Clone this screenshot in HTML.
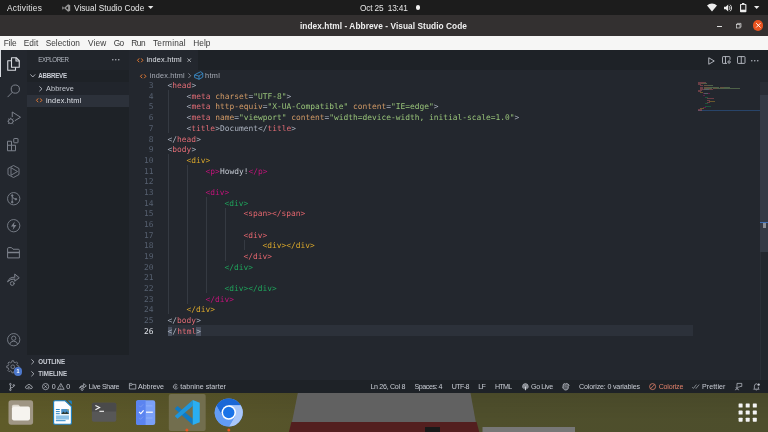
<!DOCTYPE html>
<html lang="en">
<head>
<meta charset="utf-8">
<title>index.html - Abbreve - Visual Studio Code</title>
<style>
*{box-sizing:border-box;margin:0;padding:0}
html,body{width:768px;height:432px;overflow:hidden;background:#23272e}
body{position:relative;font-family:"Liberation Sans",sans-serif;color:#c8ccd4;-webkit-font-smoothing:antialiased}
.a{position:absolute}
#root{left:0;top:0;width:768px;height:432px;will-change:transform}
.t{position:absolute;white-space:nowrap;line-height:12px;height:12px;transform:scaleY(1.1);transform-origin:0 70%}
svg{position:absolute;overflow:visible}
/* top GNOME bar */
#topbar{left:0;top:0;width:768px;height:15px;background:#1c1c1c}
#topbar .t{color:#e6e6e6;font-size:8.3px;top:2px}
/* title bar */
#titlebar{left:0;top:15px;width:768px;height:20.7px;background:#333030}
#titlebar .t{color:#f0f0f0;font-weight:bold;font-size:8.3px;top:4.6px}
/* menubar */
#menubar{left:0;top:35.7px;width:768px;height:14.3px;background:#f6f6f5}
#menubar .t{color:#3a3a3a;font-size:8.3px;top:1.8px}
/* activity bar */
#actbar{left:0;top:50px;width:27px;height:330px;background:#23272e}
#sidebar{left:27px;top:50px;width:101.7px;height:330px;background:#1e2227}
#sidebar .t{color:#c5c9d1}
#tabs{left:128.7px;top:50px;width:639.3px;height:19.7px;background:#1e2227}
#tab1{left:0;top:0;width:69.3px;height:19.7px;background:#23272e}
#crumbs{left:128.7px;top:69.7px;width:631.3px;height:12.8px;background:#23272e}
#editor{left:129px;top:70px;width:639px;height:310px;background:#23272e;overflow:hidden}
#status{left:0;top:380.2px;width:768px;height:12.5px;background:#1e2227}
#status .t{color:#c8ccd4;font-size:7.1px;top:0.5px}
#dock{left:0;top:392.7px;width:768px;height:39.3px;background:linear-gradient(rgba(0,0,0,.07),rgba(0,0,0,0) 70%),linear-gradient(to right,#5f5b29 0%,#58552a 30%,#4f4f2c 62%,#4d4e2c 100%);overflow:hidden}
/* code */
.ln{position:absolute;left:0;width:24.5px;text-align:right;font-family:"DejaVu Sans Mono","Liberation Mono",monospace;font-size:7.9px;line-height:10.7px;height:10.7px;color:#566070;white-space:pre}
.cl{position:absolute;left:38.6px;font-family:"DejaVu Sans Mono","Liberation Mono",monospace;font-size:7.9px;line-height:10.7px;height:10.7px;color:#abb2bf;white-space:pre}
.r{color:#e06c75}.o{color:#d19a66}.g{color:#98c379}.w{color:#abb2bf}
.y{color:#d8a62b}.m{color:#c2137a}.gr{color:#1fa35b}.s{color:#e4666e}
.ig{position:absolute;width:1px;background:#353a42}
.ln.cur{color:#dfe2e8}
.tx{color:#c3c8d1}
.bm{background:#4a5160}
.mm{position:absolute;height:0.8px;opacity:.5}
</style>
</head>
<body>
<div id="root" class="a">

<!-- ===== GNOME top bar ===== -->
<div id="topbar" class="a">
  <span class="t" id="tb1" style="left:7px;letter-spacing:0.238px">Activities</span>
  <svg style="left:61.5px;top:3.5px" width="8.5" height="8" viewBox="0 0 17 16"><path d="M12.2 0.6 L16.4 2.6 V13.4 L12.2 15.4 L4.6 8.6 L1.6 11 L0.4 10.3 V5.7 L1.6 5 L4.6 7.4 Z M12.2 4.6 L7.6 8 L12.2 11.4 Z M1.8 6.6 V9.4 L3.4 8 Z" fill="#9a9a9a" fill-rule="evenodd"/></svg>
  <span class="t" id="tb2" style="left:74px;letter-spacing:-0.007px">Visual Studio Code</span>
  <svg style="left:147.5px;top:6.2px" width="5.4" height="3" viewBox="0 0 54 30"><path d="M0 0H54L27 30Z" fill="#e6e6e6"/></svg>
  <span class="t" id="tb3" style="left:360px;letter-spacing:-0.170px">Oct 25&nbsp; 13:41</span>
  <div class="a" style="left:415.6px;top:5.3px;width:4.4px;height:4.4px;border-radius:50%;background:#f2f2f2"></div>
  <!-- wifi -->
  <svg style="left:707px;top:3.2px" width="10" height="8.4" viewBox="0 0 100 84"><path d="M50 84 L0 24 A78 78 0 0 1 100 24 Z" fill="#ececec"/></svg>
  <!-- volume -->
  <svg style="left:723.5px;top:3.5px" width="9.5" height="8" viewBox="0 0 95 80"><path d="M0 27H18L42 6V74L18 53H0Z" fill="#ececec"/><path d="M54 24A22 22 0 0 1 54 56M64 10A40 40 0 0 1 64 70" fill="none" stroke="#ececec" stroke-width="9" stroke-linecap="round"/></svg>
  <!-- battery -->
  <svg style="left:740.3px;top:2.8px" width="6.4" height="9.2" viewBox="0 0 64 92"><path d="M20 0H44V9H56Q64 9 64 17V84Q64 92 56 92H8Q0 92 0 84V17Q0 9 8 9H20Z" fill="#ececec"/><rect x="11" y="19" width="42" height="48" fill="#262626"/></svg>
  <svg style="left:754.3px;top:6.2px" width="5.4" height="3" viewBox="0 0 54 30"><path d="M0 0H54L27 30Z" fill="#ececec"/></svg>
</div>

<!-- ===== Title bar ===== -->
<div id="titlebar" class="a">
  <span class="t" id="tt1" style="left:300px;letter-spacing:0.060px">index.html - Abbreve - Visual Studio Code</span>
  <div class="a" style="left:717.4px;top:10.9px;width:4.2px;height:0.9px;background:#e0e0e0"></div>
  <svg style="left:736px;top:7.6px" width="5.4" height="5.4" viewBox="0 0 54 54"><path d="M12 12V4H50V42H42" fill="none" stroke="#dcdcdc" stroke-width="7"/><rect x="4" y="14" width="36" height="36" fill="none" stroke="#dcdcdc" stroke-width="7"/></svg>
  <div class="a" style="left:752.6px;top:5.2px;width:10.7px;height:10.7px;border-radius:50%;background:#e95420"></div>
  <svg style="left:755.6px;top:8.2px" width="4.7" height="4.7" viewBox="0 0 10 10"><path d="M1 1L9 9M9 1L1 9" stroke="#fff" stroke-width="2" stroke-linecap="round"/></svg>
</div>

<!-- ===== Menu bar ===== -->
<div id="menubar" class="a">
  <span class="t" id="mn1" style="left:3.7px;letter-spacing:-0.136px">File</span>
  <span class="t" id="mn2" style="left:23.7px;letter-spacing:0.144px">Edit</span>
  <span class="t" id="mn3" style="left:45.7px;letter-spacing:0.019px">Selection</span>
  <span class="t" id="mn4" style="left:88px;letter-spacing:0.130px">View</span>
  <span class="t" id="mn5" style="left:113.7px;letter-spacing:-0.652px">Go</span>
  <span class="t" id="mn6" style="left:131.3px;letter-spacing:-0.414px">Run</span>
  <span class="t" id="mn7" style="left:153px;letter-spacing:0.192px">Terminal</span>
  <span class="t" id="mn8" style="left:193.3px;letter-spacing:0.035px">Help</span>
</div>

<!-- ===== Activity bar ===== -->
<div id="actbar" class="a">
  <div class="a" style="left:0;top:0;width:1.2px;height:27px;background:#d7dae0"></div>
  <!-- explorer -->
  <svg style="left:7px;top:6.5px" width="13" height="14" viewBox="0 0 26 28" fill="none" stroke="#d7dae0" stroke-width="2.2" stroke-linejoin="round"><path d="M9 1.5H18.5L24.5 7.5V20.5H9Z"/><path d="M18 1.5V8H24.5"/><path d="M9 7.5H1.5V26.5H17V20.5"/></svg>
  <!-- search -->
  <svg style="left:7px;top:33.5px" width="13" height="14" viewBox="0 0 26 28" fill="none" stroke="#7d828c" stroke-width="2"><circle cx="16.6" cy="10.2" r="8.2"/><path d="M10.8 16.4L1.2 26.2"/></svg>
  <!-- debug -->
  <svg style="left:6.5px;top:60.5px" width="14" height="14" viewBox="0 0 28 28" fill="none" stroke="#7d828c" stroke-width="2" stroke-linejoin="round"><path d="M10.5 12V2L27 12.5L15.5 19.5"/><circle cx="7.5" cy="20.5" r="4.6"/><path d="M7.5 16V13.5M1 20.5H3M12 20.5H14M2.5 15.5L4.3 17.2M12.5 15.5L10.7 17.2M2.5 25.8L4.3 24M12.5 25.8L10.7 24"/></svg>
  <!-- extensions -->
  <svg style="left:7px;top:87.5px" width="13" height="13.5" viewBox="0 0 26 27" fill="none" stroke="#7d828c" stroke-width="2" stroke-linejoin="round"><path d="M1 6.5H9V14.5H17V25.5H1Z"/><path d="M1 14.5H9V25.5"/><rect x="13.5" y="1" width="8.5" height="8.5" rx="1"/></svg>
  <!-- hex play -->
  <svg style="left:7px;top:115px" width="13" height="13" viewBox="0 0 26 26" fill="none" stroke="#7d828c" stroke-width="1.8" stroke-linejoin="round"><path d="M13 1L24 7V19L13 25L2 19V7Z"/><path d="M8 5.5V20.5L21 13Z"/></svg>
  <!-- git graph circle -->
  <svg style="left:6.7px;top:141.7px" width="13.4" height="13.4" viewBox="0 0 27 27" fill="none" stroke="#7d828c" stroke-width="1.8"><circle cx="13.5" cy="13.5" r="12.4"/><path d="M10.5 7V20M10.5 8.5Q12 14 17.5 14.5"/><circle cx="10.5" cy="7" r="1.6" fill="#7d828c"/><circle cx="10.5" cy="20.5" r="1.6" fill="#7d828c"/><circle cx="18" cy="14.5" r="1.6" fill="#7d828c"/></svg>
  <!-- lightning circle -->
  <svg style="left:6.7px;top:168.8px" width="13.4" height="13.4" viewBox="0 0 27 27" fill="none" stroke="#7d828c" stroke-width="1.8"><circle cx="13.5" cy="13.5" r="12.4"/><path d="M15.5 5L8 15H13L11.5 22L19 12H14Z" fill="#7d828c" stroke="none"/></svg>
  <!-- folder -->
  <svg style="left:7px;top:196.5px" width="13" height="11.5" viewBox="0 0 26 23" fill="none" stroke="#7d828c" stroke-width="2" stroke-linejoin="round"><path d="M1.2 21.8V3.5Q1.2 1.2 3.5 1.2H9L12 4.5H22.5Q24.8 4.5 24.8 6.8V21.8Z"/><path d="M1.2 11H24.8" stroke-width="3"/></svg>
  <!-- live share -->
  <svg style="left:7px;top:223px" width="13" height="13" viewBox="0 0 26 26" fill="none" stroke="#7d828c" stroke-width="2" stroke-linejoin="round" stroke-linecap="round"><path d="M1.5 17Q4 8 15.5 8.5V2L24.5 9.5L15.5 16.5V12Q7 11.5 1.5 17Z" fill="#7d828c" fill-opacity="0.15"/><circle cx="10.5" cy="21" r="3.8"/></svg>
  <!-- account -->
  <svg style="left:6.7px;top:282.8px" width="13.4" height="13.4" viewBox="0 0 27 27" fill="none" stroke="#7d828c" stroke-width="1.8"><circle cx="13.5" cy="13.5" r="12.4"/><circle cx="13.5" cy="10.5" r="4.3"/><path d="M5.5 22.5Q7 16.5 13.5 16.5T21.5 22.5"/></svg>
  <!-- gear -->
  <svg style="left:6.2px;top:309.8px" width="13.6" height="13.6" viewBox="0 0 28 28" fill="none" stroke="#7d828c" stroke-width="1.8" stroke-linejoin="round"><path d="M26.47 12.22L26.47 15.78L23.33 16.24L22.19 19.02L24.08 21.57L21.57 24.08L19.02 22.19L16.24 23.33L15.78 26.47L12.22 26.47L11.76 23.33L8.98 22.19L6.43 24.08L3.92 21.57L5.81 19.02L4.67 16.24L1.53 15.78L1.53 12.22L4.67 11.76L5.81 8.98L3.92 6.43L6.43 3.92L8.98 5.81L11.76 4.67L12.22 1.53L15.78 1.53L16.24 4.67L19.02 5.81L21.57 3.92L24.08 6.43L22.19 8.98L23.33 11.76Z"/><circle cx="14" cy="14" r="3.8"/></svg>
  <div class="a" style="left:13.7px;top:316.8px;width:8.8px;height:8.8px;border-radius:50%;background:#4d78cc"></div>
  <span class="t" style="left:16.6px;top:315.3px;font-size:5.4px;font-weight:bold;color:#fff">1</span>
</div>

<!-- ===== Side bar ===== -->
<div id="sidebar" class="a">
  <div class="a" style="left:0;top:0;width:102px;height:19.7px;background:#21252b"></div>
  <div class="a" style="left:0;top:32px;width:102px;height:12.5px;background:#21252c"></div>
  <div class="a" style="left:0;top:44.5px;width:102px;height:12.1px;background:#2c313a"></div>
  <div class="a" style="left:0;top:305.4px;width:102px;height:24.8px;background:#23272e"></div>
  <span class="t" id="sb1" style="left:11.3px;top:3.7px;font-size:6.2px;color:#b4b9c2;letter-spacing:-0.440px">EXPLORER</span>
  <svg style="left:85px;top:9.2px" width="7.6" height="1.6" viewBox="0 0 76 16" fill="#c0c4cc"><circle cx="8" cy="8" r="7"/><circle cx="38" cy="8" r="7"/><circle cx="68" cy="8" r="7"/></svg>
  <svg style="left:2.6px;top:24.2px" width="5.6" height="3.6" viewBox="0 0 56 36" fill="none" stroke="#c5c9d1" stroke-width="8"><path d="M4 4L28 30L52 4"/></svg>
  <span class="t" id="sb2" style="left:11.3px;top:20px;font-size:6.2px;font-weight:bold;color:#c9cdd5;letter-spacing:-0.241px">ABBREVE</span>
  <svg style="left:11.6px;top:35.6px" width="3.6" height="5.6" viewBox="0 0 36 56" fill="none" stroke="#c5c9d1" stroke-width="8"><path d="M4 4L30 28L4 52"/></svg>
  <span class="t" id="sb3" style="left:19px;top:32.8px;font-size:7.3px;letter-spacing:0.125px">Abbreve</span>
  <svg style="left:9.2px;top:48.3px" width="6.4" height="4.6" viewBox="0 0 64 46" fill="none" stroke="#e37933" stroke-width="10"><path d="M22 4L5 23L22 42M42 4L59 23L42 42"/></svg>
  <span class="t" id="sb4" style="left:19px;top:45.2px;font-size:7.3px;color:#dfe2e8;letter-spacing:0.214px">index.html</span>
  <svg style="left:4.2px;top:308.8px" width="3.4" height="5.6" viewBox="0 0 34 56" fill="none" stroke="#c5c9d1" stroke-width="8"><path d="M4 4L29 28L4 52"/></svg>
  <span class="t" id="sb5" style="left:11.3px;top:305.6px;font-size:6.2px;font-weight:bold;color:#c9cdd5;letter-spacing:-0.070px">OUTLINE</span>
  <svg style="left:4.2px;top:321.2px" width="3.4" height="5.6" viewBox="0 0 34 56" fill="none" stroke="#c5c9d1" stroke-width="8"><path d="M4 4L29 28L4 52"/></svg>
  <span class="t" id="sb6" style="left:11.3px;top:318px;font-size:6.2px;font-weight:bold;color:#c9cdd5;letter-spacing:-0.023px">TIMELINE</span>
</div>

<!-- ===== Tabs ===== -->
<div id="tabs" class="a">
  <div id="tab1" class="a"></div>
  <svg style="left:8px;top:7.7px" width="6.4" height="4.6" viewBox="0 0 64 46" fill="none" stroke="#e37933" stroke-width="10"><path d="M22 4L5 23L22 42M42 4L59 23L42 42"/></svg>
  <span class="t" id="tab_t" style="left:17.7px;top:4px;font-size:7.3px;color:#dfe2e8;letter-spacing:0.214px">index.html</span>
  <svg style="left:58.8px;top:7.8px" width="4.4" height="4.4" viewBox="0 0 10 10"><path d="M1 1L9 9M9 1L1 9" stroke="#d7dae0" stroke-width="1.5"/></svg>
  <!-- editor actions -->
  <svg style="left:579.4px;top:6.5px" width="7" height="8" viewBox="0 0 14 16" fill="none" stroke="#c5c9d1" stroke-width="1.7" stroke-linejoin="round"><path d="M1.5 1.5L12.5 8L1.5 14.5Z"/></svg>
  <svg style="left:593.6px;top:6.3px" width="9" height="8" viewBox="0 0 18 16" fill="none" stroke="#c5c9d1" stroke-width="1.7" stroke-linejoin="round"><path d="M10 14.8H2.3Q1 14.8 1 13.5V2.5Q1 1.2 2.3 1.2H14.7Q16 1.2 16 2.5V7.5M7 1.2V14.8"/><circle cx="14.2" cy="12" r="2.4"/></svg>
  <svg style="left:608.5px;top:6.3px" width="8.5" height="8" viewBox="0 0 17 16" fill="none" stroke="#c5c9d1" stroke-width="1.7" stroke-linejoin="round"><rect x="1" y="1.2" width="15" height="13.6" rx="1.3"/><path d="M8.5 1.2V14.8"/></svg>
  <svg style="left:622.8px;top:9.6px" width="7.6" height="1.6" viewBox="0 0 76 16" fill="#c5c9d1"><circle cx="8" cy="8" r="7"/><circle cx="38" cy="8" r="7"/><circle cx="68" cy="8" r="7"/></svg>
</div>

<!-- ===== Editor ===== -->
<div id="editor" class="a">
  <div class="a" style="left:39px;top:255.11px;width:525px;height:10.68px;background:#2c313a"></div>
  <div class="ig" style="left:39.30px;top:20.10px;height:42.73px"></div>
  <div class="ig" style="left:39.30px;top:84.20px;height:160.23px"></div>
  <div class="ig" style="left:58.34px;top:94.88px;height:138.87px"></div>
  <div class="ig" style="left:77.39px;top:126.92px;height:96.14px"></div>
  <div class="ig" style="left:96.43px;top:137.61px;height:53.41px"></div>
  <div class="ig" style="left:115.48px;top:169.65px;height:10.68px"></div>
  <div class="ln" style="top:11.12px">3</div>
  <div class="cl" style="top:11.12px"><span class="w">&lt;</span><span class="r">head</span><span class="w">&gt;</span></div>
  <div class="ln" style="top:21.80px">4</div>
  <div class="cl" style="top:21.80px">    <span class="w">&lt;</span><span class="r">meta</span> <span class="o">charset</span>=<span class="g">"UTF-8"</span>&gt;</div>
  <div class="ln" style="top:32.49px">5</div>
  <div class="cl" style="top:32.49px">    <span class="w">&lt;</span><span class="r">meta</span> <span class="o">http-equiv</span>=<span class="g">"X-UA-Compatible"</span> <span class="o">content</span>=<span class="g">"IE=edge"</span>&gt;</div>
  <div class="ln" style="top:43.17px">6</div>
  <div class="cl" style="top:43.17px">    <span class="w">&lt;</span><span class="r">meta</span> <span class="o">name</span>=<span class="g">"viewport"</span> <span class="o">content</span>=<span class="g">"width=device-width, initial-scale=1.0"</span>&gt;</div>
  <div class="ln" style="top:53.85px">7</div>
  <div class="cl" style="top:53.85px">    &lt;<span class="r">title</span>&gt;Document&lt;/<span class="r">title</span>&gt;</div>
  <div class="ln" style="top:64.53px">8</div>
  <div class="cl" style="top:64.53px">&lt;/<span class="r">head</span>&gt;</div>
  <div class="ln" style="top:75.21px">9</div>
  <div class="cl" style="top:75.21px">&lt;<span class="r">body</span>&gt;</div>
  <div class="ln" style="top:85.90px">10</div>
  <div class="cl" style="top:85.90px">    <span class="y">&lt;div&gt;</span></div>
  <div class="ln" style="top:96.58px">11</div>
  <div class="cl" style="top:96.58px">        <span class="m">&lt;p&gt;</span><span class="tx">Howdy!</span><span class="m">&lt;/p&gt;</span></div>
  <div class="ln" style="top:107.26px">12</div>
  <div class="ln" style="top:117.94px">13</div>
  <div class="cl" style="top:117.94px">        <span class="m">&lt;div&gt;</span></div>
  <div class="ln" style="top:128.62px">14</div>
  <div class="cl" style="top:128.62px">            <span class="gr">&lt;div&gt;</span></div>
  <div class="ln" style="top:139.31px">15</div>
  <div class="cl" style="top:139.31px">                <span class="s">&lt;span&gt;&lt;/span&gt;</span></div>
  <div class="ln" style="top:149.99px">16</div>
  <div class="ln" style="top:160.67px">17</div>
  <div class="cl" style="top:160.67px">                <span class="s">&lt;div&gt;</span></div>
  <div class="ln" style="top:171.35px">18</div>
  <div class="cl" style="top:171.35px">                    <span class="y">&lt;div&gt;&lt;/div&gt;</span></div>
  <div class="ln" style="top:182.03px">19</div>
  <div class="cl" style="top:182.03px">                <span class="s">&lt;/div&gt;</span></div>
  <div class="ln" style="top:192.72px">20</div>
  <div class="cl" style="top:192.72px">            <span class="gr">&lt;/div&gt;</span></div>
  <div class="ln" style="top:203.40px">21</div>
  <div class="ln" style="top:214.08px">22</div>
  <div class="cl" style="top:214.08px">            <span class="gr">&lt;div&gt;&lt;/div&gt;</span></div>
  <div class="ln" style="top:224.76px">23</div>
  <div class="cl" style="top:224.76px">        <span class="m">&lt;/div&gt;</span></div>
  <div class="ln" style="top:235.44px">24</div>
  <div class="cl" style="top:235.44px">    <span class="y">&lt;/div&gt;</span></div>
  <div class="ln" style="top:246.13px">25</div>
  <div class="cl" style="top:246.13px">&lt;/<span class="r">body</span>&gt;</div>
  <div class="ln cur" style="top:256.81px">26</div>
  <div class="cl" style="top:256.81px"><span class="bm">&lt;</span>/<span class="r">html</span><span class="bm">&gt;</span></div>
  <div class="a" style="left:569px;top:40.00px;width:62px;height:1px;background:#284469"></div>
  <div class="mm" style="left:569.00px;top:12.00px;width:8.43px;background:#b4565e"></div>
  <div class="mm" style="left:569.00px;top:13.12px;width:2.81px;background:#b4565e"></div>
  <div class="mm" style="left:571.81px;top:13.12px;width:2.81px;background:#a87b52"></div>
  <div class="mm" style="left:574.62px;top:13.12px;width:3.37px;background:#7a9c61"></div>
  <div class="mm" style="left:569.00px;top:14.25px;width:3.37px;background:#b4565e"></div>
  <div class="mm" style="left:571.25px;top:15.37px;width:2.81px;background:#b4565e"></div>
  <div class="mm" style="left:574.62px;top:15.37px;width:4.50px;background:#a87b52"></div>
  <div class="mm" style="left:579.12px;top:15.37px;width:4.50px;background:#7a9c61"></div>
  <div class="mm" style="left:571.25px;top:16.50px;width:2.81px;background:#b4565e"></div>
  <div class="mm" style="left:574.62px;top:16.50px;width:6.18px;background:#a87b52"></div>
  <div class="mm" style="left:580.80px;top:16.50px;width:9.55px;background:#7a9c61"></div>
  <div class="mm" style="left:590.92px;top:16.50px;width:4.50px;background:#a87b52"></div>
  <div class="mm" style="left:595.41px;top:16.50px;width:5.62px;background:#7a9c61"></div>
  <div class="mm" style="left:571.25px;top:17.62px;width:2.81px;background:#b4565e"></div>
  <div class="mm" style="left:574.62px;top:17.62px;width:2.81px;background:#a87b52"></div>
  <div class="mm" style="left:577.43px;top:17.62px;width:5.62px;background:#7a9c61"></div>
  <div class="mm" style="left:583.61px;top:17.62px;width:4.50px;background:#a87b52"></div>
  <div class="mm" style="left:588.11px;top:17.62px;width:22.48px;background:#7a9c61"></div>
  <div class="mm" style="left:571.25px;top:18.74px;width:3.93px;background:#b4565e"></div>
  <div class="mm" style="left:575.18px;top:18.74px;width:4.50px;background:#8a909b"></div>
  <div class="mm" style="left:579.68px;top:18.74px;width:4.50px;background:#b4565e"></div>
  <div class="mm" style="left:569.00px;top:19.87px;width:3.93px;background:#b4565e"></div>
  <div class="mm" style="left:569.00px;top:20.99px;width:3.37px;background:#b4565e"></div>
  <div class="mm" style="left:571.25px;top:22.12px;width:2.81px;background:#b0882a"></div>
  <div class="mm" style="left:573.50px;top:23.24px;width:1.69px;background:#9c1463"></div>
  <div class="mm" style="left:575.18px;top:23.24px;width:3.37px;background:#8a909b"></div>
  <div class="mm" style="left:578.55px;top:23.24px;width:2.25px;background:#9c1463"></div>
  <div class="mm" style="left:573.50px;top:25.49px;width:2.81px;background:#9c1463"></div>
  <div class="mm" style="left:575.74px;top:26.61px;width:2.81px;background:#1c824a"></div>
  <div class="mm" style="left:577.99px;top:27.74px;width:7.31px;background:#b4525a"></div>
  <div class="mm" style="left:577.99px;top:29.98px;width:2.81px;background:#b4525a"></div>
  <div class="mm" style="left:580.24px;top:31.11px;width:6.18px;background:#b0882a"></div>
  <div class="mm" style="left:577.99px;top:32.23px;width:3.37px;background:#b4525a"></div>
  <div class="mm" style="left:575.74px;top:33.36px;width:3.37px;background:#1c824a"></div>
  <div class="mm" style="left:575.74px;top:35.60px;width:6.18px;background:#1c824a"></div>
  <div class="mm" style="left:573.50px;top:36.73px;width:3.37px;background:#9c1463"></div>
  <div class="mm" style="left:571.25px;top:37.85px;width:3.37px;background:#b0882a"></div>
  <div class="mm" style="left:569.00px;top:38.98px;width:3.93px;background:#b4565e"></div>
  <div class="mm" style="left:569.00px;top:40.10px;width:3.93px;background:#b4565e"></div>
  <div class="a" style="left:631px;top:12px;width:1px;height:298.2px;background:#2b2f37"></div>
  <div class="a" style="left:631.4px;top:12px;width:7.6px;height:13px;background:#292d35"></div>
  <div class="a" style="left:631.4px;top:25px;width:7.6px;height:156.9px;background:#343a45"></div>
  <div class="a" style="left:631.4px;top:152px;width:7.6px;height:1px;background:#3f6fb5"></div>
  <div class="a" style="left:633.9px;top:153px;width:3.1px;height:5px;background:#8b8f97"></div>
</div>
<div id="crumbs" class="a">
  <svg style="left:11px;top:4px" width="6.4" height="4.6" viewBox="0 0 64 46" fill="none" stroke="#e37933" stroke-width="10"><path d="M22 4L5 23L22 42M42 4L59 23L42 42"/></svg>
  <span class="t" id="cr1" style="left:21px;top:0.7px;font-size:7.3px;color:#a9aeb8;letter-spacing:0.183px">index.html</span>
  <svg style="left:59.3px;top:3.5px" width="3.2" height="5.4" viewBox="0 0 32 54" fill="none" stroke="#a9aeb8" stroke-width="7"><path d="M4 4L27 27L4 50"/></svg>
  <svg style="left:65.2px;top:1.6px" width="9.2" height="9" viewBox="0 0 23 22" fill="none" stroke="#3e9fe6" stroke-width="1.9" stroke-linejoin="round"><path d="M7.5 6L17 1.5L22 5.5V15L12.5 20.5L1.5 16V9.5Z"/><path d="M1.5 9.5L12.5 12.5L22 5.5M12.5 12.5V20.5"/></svg>
  <span class="t" id="cr2" style="left:76.3px;top:0.7px;font-size:7.3px;color:#a9aeb8;letter-spacing:0.344px">html</span>
</div>

<!-- ===== Status bar ===== -->
<div id="status" class="a">
  <!-- branch -->
  <svg style="left:8.8px;top:2.4px" width="6.2" height="8" viewBox="0 0 62 80" fill="none" stroke="#c3c7cf" stroke-width="7"><circle cx="14" cy="12" r="8"/><circle cx="14" cy="68" r="8"/><circle cx="48" cy="24" r="8"/><path d="M14 20V60M48 32Q46 46 14 50"/></svg>
  <!-- cloud -->
  <svg style="left:25.4px;top:3.7px" width="7.8" height="5.6" viewBox="0 0 78 56" fill="none" stroke="#c3c7cf" stroke-width="7" stroke-linejoin="round"><path d="M28 46H16Q4 44 4 32Q6 20 18 20Q24 4 40 4Q56 4 60 20Q74 22 74 34Q72 46 60 46H50"/><path d="M39 54V26M29 36L39 26L49 36"/></svg>
  <!-- errors -->
  <svg style="left:42.4px;top:2.8px" width="7.2" height="7.2" viewBox="0 0 72 72" fill="none" stroke="#c3c7cf" stroke-width="7"><circle cx="36" cy="36" r="31"/><path d="M24 24L48 48M48 24L24 48"/></svg>
  <span class="t" id="st1" style="left:51.8px">0</span>
  <svg style="left:56.8px;top:3px" width="7.6" height="6.8" viewBox="0 0 76 68" fill="none" stroke="#c3c7cf" stroke-width="7" stroke-linejoin="round"><path d="M38 5L72 63H4Z"/><path d="M38 26V44M38 50V56"/></svg>
  <span class="t" id="st2" style="left:66.3px">0</span>
  <!-- live share -->
  <svg style="left:79.3px;top:2.6px" width="7.8" height="7.8" viewBox="0 0 26 26" fill="none" stroke="#c3c7cf" stroke-width="2.4" stroke-linejoin="round"><path d="M1.5 17Q4 8 15.5 8.5V2L24.5 9.5L15.5 16.5V12Q7 11.5 1.5 17Z"/><circle cx="10.5" cy="21" r="3.6"/></svg>
  <span class="t" id="st3" style="left:88.7px;letter-spacing:-0.350px">Live Share</span>
  <!-- folder -->
  <svg style="left:129px;top:3.2px" width="7.2" height="6.4" viewBox="0 0 72 64" fill="none" stroke="#c3c7cf" stroke-width="7" stroke-linejoin="round"><path d="M4 60V4H26L32 14H68V60Z"/><path d="M4 22H30L34 14"/></svg>
  <span class="t" id="st4" style="left:138px;letter-spacing:-0.065px">Abbreve</span>
  <svg style="left:173.2px;top:3.6px" width="5.4" height="5.6" viewBox="0 0 54 56" fill="none" stroke="#c3c7cf" stroke-width="7" stroke-linejoin="round"><path d="M44 12A23 23 0 1 0 48 36"/><path d="M22 18V38L38 28Z" stroke-width="5"/></svg>
  <span class="t" id="st5" style="left:180.3px;letter-spacing:0.023px">tabnine starter</span>

  <span class="t" id="st6" style="left:370.4px;letter-spacing:-0.301px">Ln 26, Col 8</span>
  <span class="t" id="st7" style="left:414.6px;letter-spacing:-0.454px">Spaces: 4</span>
  <span class="t" id="st8" style="left:451.7px;letter-spacing:-0.580px">UTF-8</span>
  <span class="t" id="st9" style="left:478.3px;letter-spacing:-0.654px">LF</span>
  <span class="t" id="st10" style="left:495px;letter-spacing:-0.746px">HTML</span>
  <!-- go live -->
  <svg style="left:521.8px;top:2.4px" width="6.8" height="7.4" viewBox="0 0 68 74"><circle cx="34" cy="34" r="30" fill="#c3c7cf" fill-opacity=".45"/><circle cx="34" cy="34" r="27" fill="none" stroke="#c3c7cf" stroke-width="7" stroke-dasharray="127 43" stroke-dashoffset="-64"/><circle cx="34" cy="34" r="14" fill="none" stroke="#c3c7cf" stroke-width="6" stroke-opacity=".8"/><rect x="30" y="34" width="8" height="38" fill="#e4e7ec"/></svg>
  <span class="t" id="st11" style="left:531px;letter-spacing:-0.377px">Go Live</span>
  <!-- copilot-ish -->
  <svg style="left:562.2px;top:2.4px" width="7.6" height="7.4" viewBox="0 0 76 74" fill="#c3c7cf" fill-opacity=".35" stroke="#c3c7cf" stroke-width="8" stroke-linejoin="round"><path d="M14 12Q24 2 36 10Q50 0 60 12L72 22L62 32V56Q50 70 38 70Q24 70 14 56L6 50L14 40L6 30L14 22Z"/><path d="M30 26L40 36" stroke-width="6"/></svg>
  <span class="t" id="st12" style="left:579.1px;letter-spacing:-0.165px">Colorize: 0 variables</span>
  <svg style="left:649.2px;top:2.8px" width="7.2" height="7.2" viewBox="0 0 72 72" fill="none" stroke="#e0806a" stroke-width="8"><circle cx="36" cy="36" r="30"/><path d="M57 15L15 57"/></svg>
  <span class="t" id="st13" style="left:658.7px;color:#e0806a;letter-spacing:-0.191px">Colorize</span>
  <svg style="left:692px;top:4px" width="7.6" height="5" viewBox="0 0 76 50" fill="none" stroke="#c3c7cf" stroke-width="6"><path d="M2 32L14 44L44 6M34 38L40 44L72 6"/></svg>
  <span class="t" id="st14" style="left:702px;letter-spacing:0.083px">Prettier</span>
  <!-- feedback -->
  <svg style="left:735.2px;top:2.8px" width="7.2" height="7.4" viewBox="0 0 72 74" fill="none" stroke="#c3c7cf" stroke-width="7" stroke-linejoin="round"><path d="M20 34V4H68V34H50L40 44V34"/><circle cx="20" cy="46" r="8"/><path d="M4 72Q6 58 20 58T36 72"/></svg>
  <!-- bell -->
  <svg style="left:752.8px;top:2.6px" width="7.2" height="8" viewBox="0 0 72 80" fill="none" stroke="#c3c7cf" stroke-width="7" stroke-linejoin="round"><path d="M40 8H32Q14 12 14 32V54L6 62H62L54 54V38"/><path d="M28 66Q34 78 40 66"/><circle cx="56" cy="16" r="12" fill="#c3c7cf" stroke="none"/></svg>
</div>

<!-- ===== Dock ===== -->
<div id="dock" class="a">
  <!-- wallpaper shapes (coordinates relative to dock top = 392.7) -->
  <svg style="left:0;top:0" width="768" height="40" viewBox="0 0 768 40">
    <path d="M297.8 0H470.5L475.8 29.1H292Z" fill="#616161"/>
    <path d="M291.4 29.1H476.6L479.5 40H288.7Z" fill="#531f1f"/>
    <rect x="425" y="34" width="15" height="6" fill="#191919"/>
    <rect x="482.5" y="34" width="92.5" height="6" fill="#777777"/>
    <!-- running app highlight -->
    <rect x="168.8" y="1" width="36.9" height="36.9" rx="2" fill="#726e4e"/>
    <!-- files -->
    <rect x="8.5" y="7.3" width="24.6" height="24.4" rx="2.6" fill="#9f9684"/>
    <path d="M11.9 13.4Q11.9 11.7 13.6 11.7H18.6L20.4 14.2H11.9Z" fill="#ddd8cd"/>
    <rect x="11.9" y="13.6" width="18.1" height="13.8" rx="1.8" fill="#f6f4ef"/>
    <!-- writer -->
    <path d="M55 7.8H65.2L71.4 13.6V30Q71.4 31.3 70 31.3H55Q53.6 31.3 53.6 30V9.2Q53.6 7.8 55 7.8Z" fill="#fcfdfe" stroke="#1c7fc0" stroke-width="1.1"/>
    <path d="M67.6 7.5H70.6Q71.9 7.5 71.9 8.8V11.8Z" fill="#1c7fc0"/>
    <rect x="61.25" y="16" width="7.75" height="5.1" fill="#4a90c8"/>
    <path d="M61.25 21.1L63.4 18.6L65 20L66.6 18.4L69 21.1Z" fill="#2e3a33"/>
    <rect x="67.6" y="16.2" width="1.2" height="1.2" fill="#e8d44a"/>
    <path d="M55.9 16.5H59.75M55.9 18.6H59.75M55.9 20.7H59.75M55.9 27.7H65.6" stroke="#2a86c8" stroke-width="1"/>
    <rect x="55.9" y="22.4" width="13.1" height="4.2" fill="#8fc3e8"/>
    <!-- terminal -->
    <rect x="91.9" y="9.8" width="24.35" height="19" rx="1.8" fill="#575757"/>
    <path d="M91.9 18.55V11.6Q91.9 9.8 93.7 9.8H114.45Q116.25 9.8 116.25 11.6V18.55Z" fill="#4a4a4a"/>
    <path d="M95.4 12.5L99.6 14.6L95.4 16.8" fill="none" stroke="#f4f4f4" stroke-width="1.1"/>
    <path d="M99.4 18.3H104" stroke="#f4f4f4" stroke-width="1.1"/>
    <!-- todo -->
    <rect x="136" y="7.3" width="19.25" height="24.75" rx="2.2" fill="#7aa0f8"/>
    <path d="M145.6 7.3H138.2Q136 7.3 136 9.5V29.85Q136 32.05 138.2 32.05H145.6Z" fill="#5b84f0"/>
    <path d="M139.2 12.7L140.6 14.1L143.2 11.3M139.2 24.9L140.6 26.3L143.2 23.5" fill="none" stroke="#7f9df0" stroke-width="0.8"/>
    <path d="M146 12.9H152.5M146 25H152.5" stroke="#98b5fa" stroke-width="0.8"/>
    <path d="M139 18.9L140.8 20.7L143.6 17.4" fill="none" stroke="#fff" stroke-width="1.1"/>
    <path d="M146 19.2H152.8" stroke="#fff" stroke-width="1.2"/>
    <!-- vscode -->
    <path d="M177.5 12.9L174.75 15.8L192.75 32.05V25.8Z" fill="#0f7ac4"/>
    <path d="M192.75 7.05L174.75 22.9L177.5 25.8L192.75 12.9Z" fill="#1f96dc"/>
    <path d="M192.75 7.05L199.75 9.8V29.2L192.75 32.05Z" fill="#2aaef2"/>
    <!-- chromium -->
    <circle cx="228.75" cy="19.55" r="14.0" fill="#6a9ff5"/>
    <path d="M228.75 19.55L222.47 23.18L216.48 12.80A14.0 14.0 0 0 1 240.73 12.30L228.75 12.30Z" fill="#1b67d6"/>
    <path d="M228.75 19.55L228.75 12.30L240.73 12.30A14.0 14.0 0 0 1 229.04 33.55L235.03 23.17Z" fill="#a9c7fa"/>
    <path d="M228.75 19.55L235.03 23.17L229.04 33.55A14.0 14.0 0 0 1 216.48 12.80L222.47 23.18Z" fill="#629cf5"/>
    <circle cx="228.75" cy="19.55" r="7.25" fill="#fff"/>
    <circle cx="228.75" cy="19.55" r="5.7" fill="#1a73e8"/>
    <!-- running dots -->
    <circle cx="186.9" cy="36.9" r="1.5" fill="#e95420"/>
    <circle cx="228.8" cy="36.9" r="1.5" fill="#e95420"/>
    <!-- app grid -->
    <g fill="#f4f4f4">
      <rect x="738.6" y="10.5" width="4" height="4" rx="0.6"/><rect x="745.7" y="10.5" width="4" height="4" rx="0.6"/><rect x="752.8" y="10.5" width="4" height="4" rx="0.6"/>
      <rect x="738.6" y="17.6" width="4" height="4" rx="0.6"/><rect x="745.7" y="17.6" width="4" height="4" rx="0.6"/><rect x="752.8" y="17.6" width="4" height="4" rx="0.6"/>
      <rect x="738.6" y="24.7" width="4" height="4" rx="0.6"/><rect x="745.7" y="24.7" width="4" height="4" rx="0.6"/><rect x="752.8" y="24.7" width="4" height="4" rx="0.6"/>
    </g>
  </svg>
</div>

</div>
</body>
</html>
